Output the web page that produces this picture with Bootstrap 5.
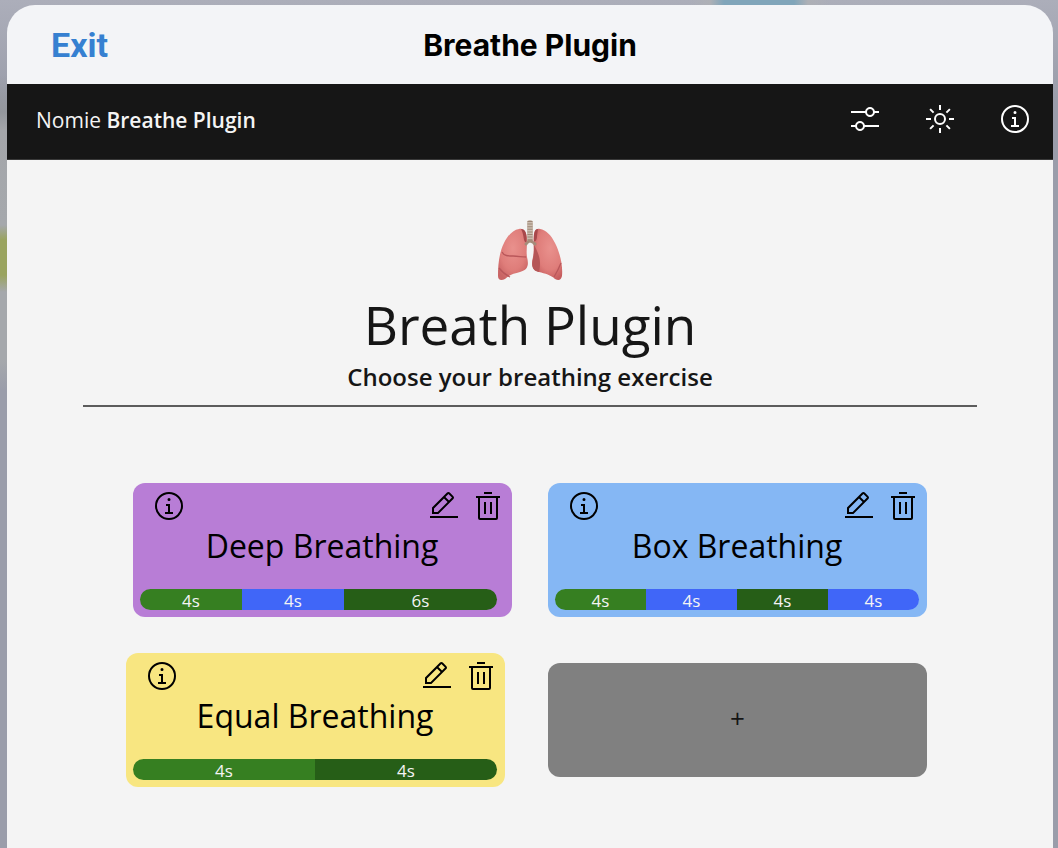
<!DOCTYPE html>
<html lang="en">
<head>
<meta charset="utf-8">
<meta name="viewport" content="width=device-width, initial-scale=1">
<title>Breathe Plugin</title>
<link href="https://cdn.jsdelivr.net/npm/bootstrap@5.3.0/dist/css/bootstrap.min.css" rel="stylesheet">
<script defer src="https://cdn.jsdelivr.net/npm/bootstrap@5.3.0/dist/js/bootstrap.bundle.min.js"></script>
<style>
  body {
    min-height: 100vh;
    font-family: "Open Sans", "Noto Sans", sans-serif;
    color: #161616;
    background:
      linear-gradient(to right, transparent 690px, #aeb0b6 710px, #80a5ba 724px, #80a5ba 794px, #aeb0b6 808px, transparent 830px) top / 100% 5px no-repeat,
      linear-gradient(transparent 75px, #94979d 112px, #a4a6aa 130px, #a5a8ac 225px, #9aa45f 240px, #9aa45f 275px, #a5a8ac 292px, #a5a8ac 360px, transparent 390px) left / 7px 100% no-repeat,
      linear-gradient(#acaeba, #9a9daa 100px, #9a9daa);
  }
  .sheet { margin: 0 5px 0 7px; padding-top: 5px; min-height: 100vh; }
  .sheet-head { height: 79px; background: #f3f4f7; border-radius: 28px 28px 0 0; }
  .side { flex: 1 1 0; padding-left: 44px; }
  .exit-btn { font: 700 34px/40px Roboto, sans-serif; color: #3680d1; }
  .sheet-title { font: 700 30px/40px Inter, sans-serif; color: #000; }
  .app-bar { height: 76px; padding: 0 22px 6px 29px; background: #161616; border-bottom: 1px solid #393939; color: #f4f4f4; }
  .brand { font-size: 21px; line-height: 30px; font-weight: 400; padding-top: 2px; }
  .brand strong { font-weight: 600; }
  .bar-actions { gap: 43px; }
  .ico { width: 32px; height: 32px; display: block; fill: currentColor; }
  .page-body { background: #f4f4f4; }
  .hero { margin: 0 76px; padding: 56px 0 13px; border-bottom: 2px solid #5c5c5c; }
  .lungs { width: 72px; height: 72px; display: block; }
  .hero h1 { font-size: 53px; line-height: 74px; font-weight: 400; }
  .hero h2 { font-size: 24px; line-height: 30px; font-weight: 600; }
  .deck { max-width: 801px; margin: 76px auto 0; padding-bottom: 61px; gap: 36px; }
  .deck-wrap { padding: 0 7px 0 0; }
  .deck-row { gap: 36px; }
  .tile { flex: 0 1 379px; height: 134px; border-radius: 12px; padding: 7px 8px 0 7px; color: #000; }
  .tile h3 { font-size: 32px; line-height: 44px; font-weight: 400; margin: 2px 0 21px; }
  .tile-tools { padding: 0 0 0 13px; }
  .violet { background: #b87dd6; }
  .sky { background: #85b7f4; }
  .lemon { background: #f8e681; }
  .steps { color: #f4f4f4; font-size: 17px; line-height: 23px; height: 21px; }
  .steps > :first-child { border-radius: 11px 0 0 11px; }
  .steps > :last-child { border-radius: 0 11px 11px 0; }
  .inhale { background: #367f21; }
  .hold { background: #4066f8; }
  .exhale { background: #265e17; }
  .tile-add { flex: 0 1 379px; height: 114px; border-radius: 12px; background: #808080; color: #161616; font-size: 26px; }
  @media (max-width: 700px) {
    .deck-row { flex-direction: column; align-items: stretch !important; }
    .tile, .tile-add { flex-basis: auto; }
    .hero { margin: 0 20px; }
    .deck-wrap { padding: 0 20px; }
    .bar-actions { gap: 12px; }
    .side { padding-left: 20px; }
    .sheet-title { font-size: 22px; }
  }
</style>
</head>
<body>
<svg class="d-none" aria-hidden="true">
  <symbol id="i-info" viewBox="0 0 32 32"><path d="M17 22V14H13v2h2v6H12v2h8V22zM16 8a1.5 1.5 0 1 0 1.5 1.5A1.5 1.5 0 0 0 16 8z"/><path d="M16 30A14 14 0 1 1 30 16 14 14 0 0 1 16 30ZM16 4A12 12 0 1 0 28 16 12 12 0 0 0 16 4Z"/></symbol>
  <symbol id="i-edit" viewBox="0 0 32 32"><path d="M2 26H30V28H2zM25.4 9c.8-.8.8-2 0-2.8l-3.6-3.6c-.8-.8-2-.8-2.8 0l-15 15V24h6.4L25.4 9zM20.4 4L24 7.6l-3 3L17.4 7 20.4 4zM6 22v-3.6l10-10 3.6 3.6-10 10H6z"/></symbol>
  <symbol id="i-trash" viewBox="0 0 32 32"><path d="M12 12H14V24H12zM18 12H20V24H18z"/><path d="M4 6V8H6V28a2 2 0 002 2H24a2 2 0 002-2V8h2V6zM8 28V8H24V28zM12 2H20V4H12z"/></symbol>
  <symbol id="i-adjust" viewBox="0 0 32 32"><path d="M30 8h-4.1c-.5-2.3-2.5-4-4.9-4s-4.4 1.7-4.9 4H2v2h14.1c.5 2.3 2.5 4 4.9 4s4.4-1.7 4.9-4H30V8zM21 12c-1.7 0-3-1.3-3-3s1.3-3 3-3 3 1.3 3 3S22.7 12 21 12zM2 24h4.1c.5 2.3 2.5 4 4.9 4s4.4-1.7 4.9-4H30v-2H15.9c-.5-2.3-2.5-4-4.9-4s-4.4 1.7-4.9 4H2V24zM11 20c1.7 0 3 1.3 3 3s-1.3 3-3 3-3-1.3-3-3S9.3 20 11 20z"/></symbol>
  <symbol id="i-sun" viewBox="0 0 32 32"><circle cx="16" cy="16" r="5" fill="none" stroke="currentColor" stroke-width="2"/><path fill="none" stroke="currentColor" stroke-width="2" d="M16 2v5M16 25v5M2 16h5M25 16h5M6.1 6.1l3.5 3.5M22.4 22.4l3.5 3.5M6.1 25.9l3.5-3.5M22.4 9.6l3.5-3.5"/></symbol>
</svg>

<div class="sheet d-flex flex-column">
  <header class="sheet-head d-flex align-items-center">
    <div class="side"><button type="button" class="exit-btn btn p-0 border-0">Exit</button></div>
    <div class="sheet-title">Breathe Plugin</div>
    <div class="side"></div>
  </header>

  <nav class="app-bar d-flex align-items-center justify-content-between" aria-label="Plugin">
    <div class="brand">Nomie <strong>Breathe Plugin</strong></div>
    <div class="bar-actions d-flex">
      <button type="button" class="btn p-0 border-0 text-white" aria-label="Settings"><svg class="ico"><use href="#i-adjust"/></svg></button>
      <button type="button" class="btn p-0 border-0 text-white" aria-label="Theme"><svg class="ico"><use href="#i-sun"/></svg></button>
      <button type="button" class="btn p-0 border-0 text-white" aria-label="About"><svg class="ico"><use href="#i-info"/></svg></button>
    </div>
  </nav>

  <main class="page-body flex-grow-1">
    <section class="hero text-center">
      <svg class="lungs mx-auto" viewBox="0 0 72 72" role="img" aria-label="Lungs">
        <defs>
          <radialGradient id="lobeL" cx=".5" cy=".38" r=".65"><stop offset="0" stop-color="#e9918d"/><stop offset=".65" stop-color="#df7d7a"/><stop offset="1" stop-color="#c96464"/></radialGradient>
          <radialGradient id="lobeR" cx=".6" cy=".38" r=".65"><stop offset="0" stop-color="#e9918d"/><stop offset=".65" stop-color="#df7d7a"/><stop offset="1" stop-color="#c55c5d"/></radialGradient>
        </defs>
        <path d="M25 13c5-1 7.500 3 8 9 .3 7-1 13 0 19 2 8 1 13-7 15-6 1.500-11 3-15 7-4 2-7 1-7-3C4 49 5 37 10 27c4-8 9-13 15-14z" fill="url(#lobeL)"/>
        <path d="M46 13c-5-1-6 3-6.500 9-.2 8 1 13-.5 19-2 8-1 13 6 15 6 1.500 12 3 16 7 4 2 6 1 7-3 1-11-2-23-7-33-4-8-9-13-15-14z" fill="url(#lobeR)"/>
        <path d="M40 29c3 5 6 12 6 18 0 4-.5 7-1 9-6-1-8-5-6-13 1-5 1-9 1-14z" fill="#b55657"/>
        <path d="M27 13c3.500 0 5.500 3 5.500 9v4c-2 1-2.500-2-3-5-.5-3-1-5-2.500-8zM44 13c-3 0-4 3-4 9v3c2 1 3-2 3-5z" fill="#a8484b"/>
        <path d="M8 36c2 4 6 4 11 4s9 1 13 1M5 52c3 4 7 7 11 9M67 47c-2 5-4 9-7 14" fill="none" stroke="#b9575a" stroke-width="1.300"/>
        <path d="M36 7v17" stroke="#cbbcaf" stroke-width="6" stroke-linecap="round"/>
        <path d="M36 5v20" stroke="#9d8777" stroke-width="5" stroke-dasharray="1 1.600"/>
        <path d="M35 25l-3 3M37 25l4 3" stroke="#a58b79" stroke-width="3" stroke-linecap="round" stroke-dasharray="1.500 2"/>
      </svg>
      <h1 class="m-0">Breath Plugin</h1>
      <h2 class="m-0">Choose your breathing exercise</h2>
    </section>

    <div class="deck-wrap">
      <div class="deck d-flex flex-column">
        <div class="deck-row d-flex justify-content-end">
          <article class="tile violet">
            <div class="tile-tools d-flex">
              <button type="button" class="btn p-0 border-0 me-auto text-black" aria-label="About Deep Breathing"><svg class="ico"><use href="#i-info"/></svg></button>
              <button type="button" class="btn p-0 border-0 text-black me-2 pe-1" aria-label="Edit Deep Breathing"><svg class="ico"><use href="#i-edit"/></svg></button>
              <button type="button" class="btn p-0 border-0 text-black" aria-label="Delete Deep Breathing"><svg class="ico"><use href="#i-trash"/></svg></button>
            </div>
            <h3 class="text-center">Deep Breathing</h3>
            <div class="steps d-flex text-center" style="width:98%">
              <div class="inhale" style="width:28.6%">4s</div><div class="hold" style="width:28.6%">4s</div><div class="exhale" style="width:42.8%">6s</div>
            </div>
          </article>
          <article class="tile sky">
            <div class="tile-tools d-flex">
              <button type="button" class="btn p-0 border-0 me-auto text-black" aria-label="About Box Breathing"><svg class="ico"><use href="#i-info"/></svg></button>
              <button type="button" class="btn p-0 border-0 text-black me-2 pe-1" aria-label="Edit Box Breathing"><svg class="ico"><use href="#i-edit"/></svg></button>
              <button type="button" class="btn p-0 border-0 text-black" aria-label="Delete Box Breathing"><svg class="ico"><use href="#i-trash"/></svg></button>
            </div>
            <h3 class="text-center">Box Breathing</h3>
            <div class="steps d-flex text-center">
              <div class="inhale" style="width:25%">4s</div><div class="hold" style="width:25%">4s</div><div class="exhale" style="width:25%">4s</div><div class="hold" style="width:25%">4s</div>
            </div>
          </article>
        </div>
        <div class="deck-row d-flex justify-content-between align-items-center">
          <article class="tile lemon">
            <div class="tile-tools d-flex">
              <button type="button" class="btn p-0 border-0 me-auto text-black" aria-label="About Equal Breathing"><svg class="ico"><use href="#i-info"/></svg></button>
              <button type="button" class="btn p-0 border-0 text-black me-2 pe-1" aria-label="Edit Equal Breathing"><svg class="ico"><use href="#i-edit"/></svg></button>
              <button type="button" class="btn p-0 border-0 text-black" aria-label="Delete Equal Breathing"><svg class="ico"><use href="#i-trash"/></svg></button>
            </div>
            <h3 class="text-center">Equal Breathing</h3>
            <div class="steps d-flex text-center">
              <div class="inhale" style="width:50%">4s</div><div class="exhale" style="width:50%">4s</div>
            </div>
          </article>
          <button type="button" class="tile-add btn p-0 pb-1 border-0" aria-label="Add exercise">+</button>
        </div>
      </div>
    </div>
  </main>
</div>
</body>
</html>
